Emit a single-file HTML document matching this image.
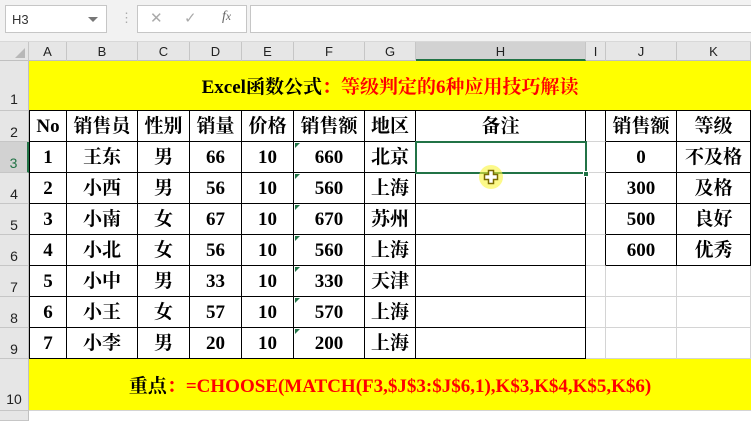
<!DOCTYPE html>
<html><head><meta charset="utf-8">
<style>
*{box-sizing:border-box;margin:0;padding:0}
body{width:751px;height:414px;overflow:hidden;background:#fff;position:relative;font-family:"Liberation Sans",sans-serif}
.tb{position:absolute;left:0;top:0;width:751px;height:42px;background:#f2f2f2;border-bottom:1px solid #d8d8d8}
.nb{position:absolute;left:5px;top:5px;width:102px;height:28px;background:#fff;border:1px solid #c6c6c6;font-size:13px;color:#333;padding:6px 0 0 6px}
.nb:after{content:"";position:absolute;right:8px;top:11px;border-left:5px solid transparent;border-right:5px solid transparent;border-top:5px solid #777}
.ic{position:absolute;left:137px;top:5px;width:110px;height:28px;background:#fff;border:1px solid #c6c6c6;color:#aaa;font-size:15px}
.fb{position:absolute;left:250px;top:5px;width:510px;height:28px;background:#fff;border:1px solid #c6c6c6}
.ch{position:absolute;top:42px;left:0;width:751px;height:19px;background:#e6e6e6;border-bottom:1px solid #c0c0c0}
.ch div{position:absolute;top:0;height:19px;border-right:1px solid #c6c6c6;text-align:center;font-size:13px;line-height:19px;color:#222}
.rh{position:absolute;left:0;width:29px;background:#e6e6e6;border-bottom:1px solid #c6c6c6;border-right:1px solid #c0c0c0;font-size:14px;color:#222;text-align:center}
table{position:absolute;left:29px;top:61px;border-collapse:separate;border-spacing:0;table-layout:fixed;width:722px}
td{border-right:1px solid #d4d4d4;border-bottom:1px solid #d4d4d4;text-align:center;font-family:"Liberation Serif","Noto Serif CJK SC",serif;font-weight:bold;font-size:19px;color:#000;padding:0;overflow:hidden;white-space:nowrap}
tr.r td{height:31px;padding-top:2px;line-height:26px}
.k{border-right-color:#000;border-bottom-color:#000}
.kl{border-left:1px solid #000}
.kr{border-right-color:#000}
.y{background:#ff0;font-size:19px}
.red{color:#f00}
.tri{position:absolute;width:0;height:0;border-top:5px solid #217346;border-right:5px solid transparent}
</style></head><body>
<div class="tb">
<div class="nb">H3</div>
<div style="position:absolute;left:120px;top:10px;color:#aaa;font-size:13px">⋮</div>
<div class="ic"><span style="position:absolute;left:12px;top:3px">✕</span><span style="position:absolute;left:46px;top:3px">✓</span><span style="position:absolute;left:84px;top:3px;font-family:'Liberation Serif',serif;font-style:italic;color:#666;font-size:14px">f<small>x</small></span></div>
<div class="fb"></div>
</div>
<div class="ch">
<div style="left:0;width:29px"><span style="position:absolute;right:3px;bottom:3px;border-left:10px solid transparent;border-bottom:10px solid #b8b8b8"></span></div>
<div style="left:29px;width:38px">A</div>
<div style="left:67px;width:71px">B</div>
<div style="left:138px;width:52px">C</div>
<div style="left:190px;width:52px">D</div>
<div style="left:242px;width:52px">E</div>
<div style="left:294px;width:71px">F</div>
<div style="left:365px;width:51px">G</div>
<div style="left:416px;width:170px;background:#d2d2d2;border-bottom:2px solid #217346">H</div>
<div style="left:586px;width:20px">I</div>
<div style="left:606px;width:71px">J</div>
<div style="left:677px;width:74px">K</div>
</div>
<div class="rh" style="top:61px;height:50px;line-height:76px">1</div>
<div class="rh" style="top:111px;height:31px;line-height:42px">2</div>
<div class="rh" style="top:142px;height:31px;line-height:42px;background:#d2d2d2;border-right:2px solid #217346;color:#217346">3</div>
<div class="rh" style="top:173px;height:31px;line-height:42px">4</div>
<div class="rh" style="top:204px;height:31px;line-height:42px">5</div>
<div class="rh" style="top:235px;height:31px;line-height:42px">6</div>
<div class="rh" style="top:266px;height:31px;line-height:42px">7</div>
<div class="rh" style="top:297px;height:31px;line-height:42px">8</div>
<div class="rh" style="top:328px;height:31px;line-height:42px">9</div>
<div class="rh" style="top:359px;height:52px;line-height:80px">10</div>
<div class="rh" style="top:411px;height:10px"></div>
<table>
<colgroup><col style="width:38px"><col style="width:71px"><col style="width:52px"><col style="width:52px"><col style="width:52px"><col style="width:71px"><col style="width:51px"><col style="width:170px"><col style="width:20px"><col style="width:71px"><col style="width:74px"></colgroup>
<tr><td colspan="11" class="y" style="height:50px;border-bottom:1px solid #000;border-right:none">Excel函数公式<span class="red">：等级判定的6种应用技巧解读</span></td></tr>
<tr class="r"><td class="k kl">No</td><td class="k">销售员</td><td class="k">性别</td><td class="k">销量</td><td class="k">价格</td><td class="k">销售额</td><td class="k">地区</td><td class="k">备注</td><td class="kr"></td><td class="k">销售额</td><td class="k">等级</td></tr>
<tr class="r"><td class="k kl">1</td><td class="k">王东</td><td class="k">男</td><td class="k">66</td><td class="k">10</td><td class="k">660</td><td class="k">北京</td><td class="k"></td><td class="kr"></td><td class="k">0</td><td class="k">不及格</td></tr>
<tr class="r"><td class="k kl">2</td><td class="k">小西</td><td class="k">男</td><td class="k">56</td><td class="k">10</td><td class="k">560</td><td class="k">上海</td><td class="k"></td><td class="kr"></td><td class="k">300</td><td class="k">及格</td></tr>
<tr class="r"><td class="k kl">3</td><td class="k">小南</td><td class="k">女</td><td class="k">67</td><td class="k">10</td><td class="k">670</td><td class="k">苏州</td><td class="k"></td><td class="kr"></td><td class="k">500</td><td class="k">良好</td></tr>
<tr class="r"><td class="k kl">4</td><td class="k">小北</td><td class="k">女</td><td class="k">56</td><td class="k">10</td><td class="k">560</td><td class="k">上海</td><td class="k"></td><td class="kr"></td><td class="k">600</td><td class="k">优秀</td></tr>
<tr class="r"><td class="k kl">5</td><td class="k">小中</td><td class="k">男</td><td class="k">33</td><td class="k">10</td><td class="k">330</td><td class="k">天津</td><td class="k"></td><td></td><td></td><td></td></tr>
<tr class="r"><td class="k kl">6</td><td class="k">小王</td><td class="k">女</td><td class="k">57</td><td class="k">10</td><td class="k">570</td><td class="k">上海</td><td class="k"></td><td></td><td></td><td></td></tr>
<tr class="r"><td class="k kl">7</td><td class="k">小李</td><td class="k">男</td><td class="k">20</td><td class="k">10</td><td class="k">200</td><td class="k">上海</td><td class="k"></td><td></td><td></td><td></td></tr>
<tr><td colspan="11" class="y" style="height:52px;border-right:none">重点<span class="red">：=CHOOSE(MATCH(F3,$J$3:$J$6,1),K$3,K$4,K$5,K$6)</span></td></tr>
</table>
<div class="tri" style="left:295px;top:143px"></div>
<div class="tri" style="left:295px;top:174px"></div>
<div class="tri" style="left:295px;top:205px"></div>
<div class="tri" style="left:295px;top:236px"></div>
<div class="tri" style="left:295px;top:267px"></div>
<div class="tri" style="left:295px;top:298px"></div>
<div class="tri" style="left:295px;top:329px"></div>
<div style="position:absolute;left:415px;top:141px;width:172px;height:33px;border:2px solid #217346"></div>
<div style="position:absolute;left:583px;top:171px;width:6px;height:6px;background:#217346;border:1px solid #fff"></div>
<div style="position:absolute;left:479px;top:165px;width:24px;height:24px;border-radius:50%;background:rgba(250,245,60,0.6)"></div>
<svg style="position:absolute;left:483px;top:169px" width="16" height="16" viewBox="0 0 16 16"><path d="M5.5 1.5h5v4h4v5h-4v4h-5v-4h-4v-5h4z" fill="#fff" stroke="#7a6a00" stroke-width="1.5"/></svg>
</body></html>
